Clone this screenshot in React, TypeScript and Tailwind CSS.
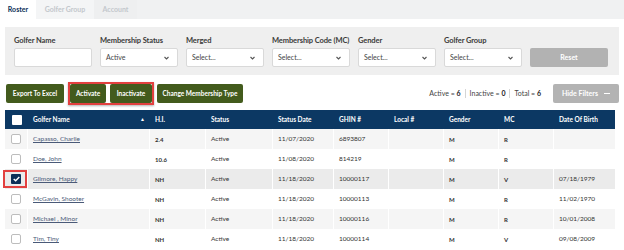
import React from 'react';

type Row = {
  name: string;
  hi: string;
  status: string;
  date: string;
  ghin: string;
  gender: string;
  mc: string;
  dob: string;
  checked?: boolean;
};

const rows: Row[] = [
  { name: 'Capasso, Charlie', hi: '2.4', status: 'Active', date: '11/07/2020', ghin: '6893807', gender: 'M', mc: 'R', dob: '' },
  { name: 'Doe, John', hi: '10.6', status: 'Active', date: '11/08/2020', ghin: '814219', gender: 'M', mc: 'R', dob: '' },
  { name: 'Gilmore, Happy', hi: 'NH', status: 'Active', date: '11/18/2020', ghin: '10000117', gender: 'M', mc: 'V', dob: '07/18/1979', checked: true },
  { name: 'McGavin, Shooter', hi: 'NH', status: 'Active', date: '11/18/2020', ghin: '10000113', gender: 'M', mc: 'R', dob: '11/02/1970' },
  { name: 'Michael , Minor', hi: 'NH', status: 'Active', date: '11/18/2020', ghin: '10000116', gender: 'M', mc: 'R', dob: '10/01/2008' },
  { name: 'Tim, Tiny', hi: 'NH', status: 'Active', date: '11/18/2020', ghin: '10000114', gender: 'M', mc: 'V', dob: '09/08/2009' },
];

// column template shared by header and rows
const cols = 'grid grid-cols-[23px_122px_56px_67px_61px_55px_55px_55px_55px_61px]';

function Chevron() {
  return (
    <svg width="5" height="4" viewBox="0 0 10 7" className="shrink-0">
      <path d="M1 1.5 L5 5.5 L9 1.5" fill="none" stroke="#555" strokeWidth="2.2" />
    </svg>
  );
}

function Select({ value }: { value: string }) {
  return (
    <div className="flex h-[19px] items-center justify-between rounded-[2px] border border-[#d9d9d9] bg-white pl-[5px] pr-[8px] text-[7px] text-[#444]">
      <span>{value}</span>
      <Chevron />
    </div>
  );
}

function Box({ checked, header }: { checked?: boolean; header?: boolean }) {
  if (checked) {
    return (
      <div className="flex h-[10px] w-[10px] items-center justify-center rounded-[1px] bg-[#0c2f57]">
        <svg width="7" height="6" viewBox="0 0 10 8">
          <path d="M1 4 L3.8 6.6 L9 1.2" fill="none" stroke="white" strokeWidth="2" />
        </svg>
      </div>
    );
  }
  return (
    <div
      className={
        header
          ? 'h-[10px] w-[10px] rounded-[1px] bg-white'
          : 'h-[10px] w-[10px] rounded-[2px] border border-[#bdbdbd] bg-white'
      }
    />
  );
}

export default function App() {
  const filters = [
    { label: 'Golfer Name', value: null },
    { label: 'Membership Status', value: 'Active' },
    { label: 'Merged', value: 'Select...' },
    { label: 'Membership Code (MC)', value: 'Select...' },
    { label: 'Gender', value: 'Select...' },
    { label: 'Golfer Group', value: 'Select...' },
  ];

  return (
    <div className="h-[250px] w-[624px] overflow-hidden bg-white font-['Lato',sans-serif] text-[#333]">
      {/* tabs */}
      <div className="flex h-[19px] bg-[#f0f1f2] text-[7px] font-bold">
        <div className="flex w-[36px] items-center justify-center bg-white text-[#0c2f57]">Roster</div>
        <div className="flex w-[58px] items-center justify-center bg-[#f4f5f6] text-[#c3c7cc]">Golfer Group</div>
        <div className="flex w-[43px] items-center justify-center bg-[#eeeff0] text-[#c3c7cc]">Account</div>
      </div>

      {/* filter panel */}
      <div className="mx-[5px] mt-[8px] bg-[#efefef] pb-[8px] pl-[9px] pr-[7px] pt-[8px]">
        <div className="grid grid-cols-[repeat(7,78px)] gap-x-[8px]">
          {filters.map((f) => (
            <div key={f.label} className="flex flex-col">
              <div className="mb-[2px] h-[11px] whitespace-nowrap text-[7.5px] font-bold leading-[11px] tracking-[-0.1px] text-[#3a3a3a]">
                {f.label}
              </div>
              {f.value === null ? (
                <div className="h-[19px] rounded-[2px] border border-[#d9d9d9] bg-white" />
              ) : (
                <Select value={f.value} />
              )}
            </div>
          ))}
          <div className="flex flex-col justify-end">
            <div className="flex h-[19px] items-center justify-center rounded-[2px] bg-[#b2b2b2] text-[7px] font-bold text-white">
              Reset
            </div>
          </div>
        </div>
      </div>

      {/* actions */}
      <div className="mx-[5px] mt-[7px] flex h-[23px] items-center">
        <div className="ml-[1px] flex h-[19px] w-[58px] items-center justify-center rounded-[2px] bg-[#435b1d] text-[6.5px] font-bold text-white">
          Export To Excel
        </div>
        <div className="ml-[4px] flex gap-[4px] border-2 border-[#e2403f] bg-white shadow-[0_1px_2px_rgba(0,0,0,0.3)]">
          <div className="flex h-[19px] w-[36px] items-center justify-center rounded-[2px] bg-[#435b1d] text-[6.5px] font-bold text-white">
            Activate
          </div>
          <div className="flex h-[19px] w-[42px] items-center justify-center rounded-[2px] bg-[#435b1d] text-[6.5px] font-bold text-white">
            Inactivate
          </div>
        </div>
        <div className="ml-[3px] flex h-[19px] w-[86px] items-center justify-center rounded-[2px] bg-[#435b1d] text-[6.5px] font-bold text-white">
          Change Membership Type
        </div>
        <div className="ml-auto flex items-center text-[7px] text-[#444]">
          <span>
            Active = <b className="text-[#222]">6</b>
          </span>
          <span className="mx-[4px] h-[9px] w-px bg-[#d5d5d5]" />
          <span>
            Inactive = <b className="text-[#222]">0</b>
          </span>
          <span className="mx-[4px] h-[9px] w-px bg-[#d5d5d5]" />
          <span>
            Total = <b className="text-[#222]">6</b>
          </span>
        </div>
        <div className="ml-[12px] flex h-[19px] w-[66px] items-center justify-center gap-[6px] rounded-[2px] bg-[#b3b3b3] text-[7px] font-bold text-white">
          Hide Filters
          <span className="h-[1.5px] w-[6px] bg-white" />
        </div>
      </div>

      {/* table */}
      <div className="mx-[5px] mt-[5px] w-[610px]">
        <div className={`${cols} h-[19px] items-center bg-[#0c3863] text-[6.5px] font-bold text-white`}>
          <div className="flex justify-center">
            <Box header />
          </div>
          <div className="flex items-center justify-between pl-[5px] pr-[5px]">
            <span>Golfer Name</span>
            <span className="text-[5px]">▲</span>
          </div>
          <div className="pl-[5px]">H.I.</div>
          <div className="pl-[5px]">Status</div>
          <div className="pl-[5px]">Status Date</div>
          <div className="pl-[5px]">GHIN #</div>
          <div className="pl-[5px]">Local #</div>
          <div className="pl-[5px]">Gender</div>
          <div className="pl-[5px]">MC</div>
          <div className="pl-[5px]">Date Of Birth</div>
        </div>
        {rows.map((r, i) => (
          <div
            key={r.name}
            className={`${cols} h-[20px] items-stretch text-[6.5px] text-[#333] ${
              r.checked ? 'bg-[#ebebeb]' : i % 2 === 0 ? 'bg-[#f5f5f5]' : 'bg-white'
            }`}
          >
            <div className="relative flex items-center justify-center border-r border-white">
              <Box checked={r.checked} />
              {r.checked && (
                <div className="absolute left-[-2px] top-[1px] h-[18px] w-[24px] border-2 border-[#e2403f]" />
              )}
            </div>
            <div className="flex items-center border-r border-white pl-[5px] text-[#4a5a78] underline">{r.name}</div>
            <div className="flex items-center border-r border-white pl-[5px] text-[6px] font-bold">{r.hi}</div>
            <div className="flex items-center border-r border-white pl-[5px]">{r.status}</div>
            <div className="flex items-center border-r border-white pl-[5px]">{r.date}</div>
            <div className="flex items-center border-r border-white pl-[5px]">{r.ghin}</div>
            <div className="flex items-center border-r border-white pl-[5px]" />
            <div className="flex items-center border-r border-white pl-[5px] text-[6px] font-bold">{r.gender}</div>
            <div className="flex items-center border-r border-white pl-[5px] text-[6px] font-bold">{r.mc}</div>
            <div className="flex items-center pl-[5px]">{r.dob}</div>
          </div>
        ))}
      </div>
    </div>
  );
}
